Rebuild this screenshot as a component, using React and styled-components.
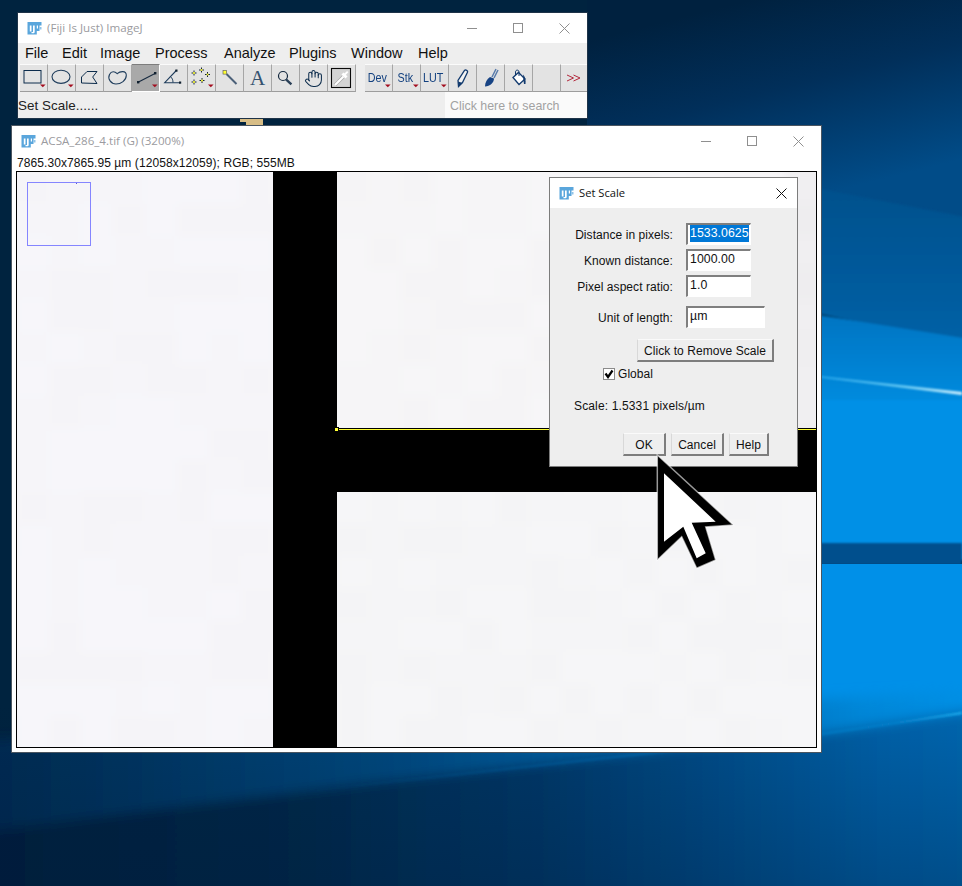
import React from "react";
import styled, { createGlobalStyle } from "styled-components";
import { Hand } from "lucide-react";

const Global = createGlobalStyle`
  html, body { margin: 0; padding: 0; background: #00213f; }
  #root { width: 962px; height: 886px; }
  * { box-sizing: border-box; }
`;

const Desktop = styled.div`
  position: relative;
  width: 962px;
  height: 886px;
  overflow: hidden;
  font-family: "Liberation Sans", Arial, sans-serif;
`;
const WallpaperSvg = styled.svg`
  position: absolute;
  inset: 0;
  display: block;
`;

const Win = styled.div`
  position: absolute;
  left: ${(p) => p.$x}px;
  top: ${(p) => p.$y}px;
  width: ${(p) => p.$w}px;
  height: ${(p) => p.$h}px;
  border: 1px solid ${(p) => p.$edge};
  background: ${(p) => p.$bg};
  display: flex;
  flex-direction: column;
`;
const TitleBar = styled.div`
  height: ${(p) => p.$h}px;
  flex: none;
  background: #fff;
  display: flex;
  align-items: center;
  padding-left: ${(p) => p.$pad}px;
`;
const TitleText = styled.span`
  margin: -2px 0 0 ${(p) => p.$gap}px;
  font-family: "Open Sans", sans-serif;
  font-size: ${(p) => p.$size || 11.6}px;
  color: ${(p) => p.$color};
  white-space: nowrap;
  flex: 1;
`;
const Controls = styled.div`
  display: flex;
  flex: none;
`;
const Control = styled.div`
  width: ${(p) => p.$w || 46}px;
  height: 28px;
  display: flex;
  align-items: center;
  justify-content: center;
`;

const MenuBar = styled.div`
  height: 21px;
  flex: none;
  display: flex;
  align-items: center;
  padding: 0 0 2px 7px;
  font-size: 14.5px;
  color: #111;
`;
const MenuItem = styled.span`
  width: ${(p) => p.$w}px;
`;
const ToolBar = styled.div`
  height: 28px;
  flex: none;
  display: flex;
  padding-left: 2px;
  overflow: hidden;
`;
const ToolGap = styled.div`
  width: 9px;
  flex: none;
`;
const Tool = styled.div`
  width: 28px;
  height: 28px;
  flex: none;
  position: relative;
  display: flex;
  align-items: center;
  justify-content: center;
  background: ${(p) => (p.$on ? "#a9a9a9" : "#e3e3e3")};
  border-style: solid;
  border-width: 1px 1px 1px 0;
  border-color: ${(p) => (p.$on ? "#7d7d7d #fff #fff #7d7d7d" : "#fbfbfb #a6a6a6 #9d9d9d #fbfbfb")};
`;
const ToolSvg = styled.svg`
  position: absolute;
  left: 0;
  top: -1px;
  width: 28px;
  height: 28px;
  display: block;
`;
const Mono = styled.span`
  font-size: 12.8px;
  color: #12407f;
  transform: scaleX(0.84);
  margin-top: -2px;
  margin-left: -3px;
  white-space: nowrap;
`;
const StatusRow = styled.div`
  flex: 1;
  display: flex;
  min-height: 0;
`;
const StatusText = styled.div`
  width: 427px;
  font-size: 13.4px;
  letter-spacing: 0.05px;
  line-height: 27px;
  color: #222;
  white-space: nowrap;
`;
const SearchBox = styled.div`
  flex: 1;
  background: #fafafa;
  color: #a2a2a2;
  font-size: 12.4px;
  line-height: 28px;
  padding-left: 5px;
  white-space: nowrap;
`;

const InfoLine = styled.div`
  height: 15px;
  flex: none;
  padding-left: 5px;
  font-size: 12px;
  letter-spacing: 0.08px;
  line-height: 15px;
  color: #111;
  white-space: nowrap;
`;
const CanvasFrame = styled.div`
  margin-left: 4px;
  width: 801px;
  height: 577px;
  border: 1px solid #000;
  display: grid;
  grid-template-columns: 256px 64px 479px;
  grid-template-rows: 256px 64px 255px;
  position: relative;
  background: #000;
`;
const ImagePanel = styled.div`
  grid-column: ${(p) => p.$col};
  grid-row: ${(p) => p.$row};
  overflow: hidden;
`;
const PixelSvg = styled.svg`
  display: block;
`;
const NavBox = styled.div`
  position: absolute;
  left: 10px;
  top: 10px;
  width: 64px;
  height: 64px;
  border: 1px solid #8585ff;
`;
const NavDot = styled.div`
  position: absolute;
  left: 48px;
  top: 0;
  width: 1px;
  height: 1px;
  background: #5a5ad0;
`;
const SelectionLine = styled.div`
  position: absolute;
  left: 320px;
  right: 0;
  top: 256px;
  height: 2px;
  background: #ffff33;
  border-top: 1px solid #000;
`;
const Handle = styled.div`
  position: absolute;
  left: 317px;
  top: 255px;
  width: 5px;
  height: 5px;
  background: #ffff33;
  border: 1px solid #000;
`;

const DialogBody = styled.div`
  flex: 1;
  background: #eeeeee;
  padding-top: 15px;
  font-size: 12px;
  letter-spacing: 0.06px;
  color: #111;
`;
const FieldRow = styled.div`
  display: flex;
  align-items: center;
  height: 22px;
  margin-top: ${(p) => p.$mt || 0}px;
`;
const FieldLabel = styled.div`
  width: 123px;
  padding-top: 2px;
  text-align: right;
  margin-right: 13px;
  white-space: nowrap;
`;
const Field = styled.div`
  width: ${(p) => p.$w}px;
  height: 22px;
  background: #fff;
  border-style: solid;
  border-width: 2px 1px 1px 2px;
  border-color: #7f7f7f #fff #fff #7f7f7f;
  padding-left: 2px;
  line-height: 17px;
  font-size: 12.3px;
  white-space: nowrap;
`;
const Selected = styled.span`
  background: #0078d7;
  color: #fff;
  display: inline-block;
  line-height: 17px;
`;
const DlgButton = styled.div`
  width: ${(p) => p.$w}px;
  height: 23px;
  background: #eeeeee;
  border-style: solid;
  border-width: 1px 2px 2px 1px;
  border-color: #fafafa #7d7d7d #7d7d7d #d8d8d8;
  text-align: center;
  line-height: 22px;
  font-size: 12px;
  color: #111;
  flex: none;
`;
const RemoveWrap = styled.div`
  margin: 11px 0 0 87px;
`;
const CheckRow = styled.div`
  display: flex;
  align-items: center;
  margin: 5px 0 0 53px;
  height: 13px;
  gap: 3px;
`;
const CheckBox = styled.div`
  width: 12px;
  height: 12px;
  background: #fff;
  border: 1px solid #8b8b8b;
  display: flex;
  align-items: center;
  justify-content: center;
`;
const ScaleText = styled.div`
  margin: 19px 0 0 24px;
  line-height: 15px;
  letter-spacing: 0.14px;
  white-space: nowrap;
`;
const ButtonRow = styled.div`
  display: flex;
  gap: 5px;
  margin: 19px 0 0 73px;
`;
const CursorSvg = styled.svg`
  position: absolute;
  left: 650px;
  top: 450px;
  display: block;
`;

const NAVY = "#0c2c4c";

function FijiIcon() {
  return (
    <svg width="15" height="15" viewBox="0 0 15 15">
      <path d="M0.500 1h14v3.500h-2V10H9.800v3.500H0.500z" fill="#5aa6dc" />
      <path d="M12.500 6h2v2.500h-2z" fill="#8fc3e8" />
      <path d="M2.800 4.500h1.700v6H2.800zM6 4.500h1.700v6.300c0 1-.7 1.500-1.700 1.500H4.500v-1.300H6z" fill="#fff" />
      <path d="M9.800 4.500h1.200v3H9.800z" fill="#fff" />
    </svg>
  );
}

function WinControls({ color }) {
  return (
    <Controls>
      <Control>
        <svg width="10" height="10" viewBox="0 0 10 10"><path d="M0 5.500h10" stroke={color} /></svg>
      </Control>
      <Control>
        <svg width="10" height="10" viewBox="0 0 10 10"><rect x=".5" y=".5" width="9" height="9" fill="none" stroke={color} /></svg>
      </Control>
      <Control>
        <svg width="11" height="11" viewBox="0 0 11 11"><path d="M.5.5l10 10M10.500.5l-10 10" stroke={color} /></svg>
      </Control>
    </Controls>
  );
}

const Tri = () => <path d="M20 20.500h5.600l-2.800 2.800z" fill="#a30d1e" />;

function Icon({ children }) {
  return <ToolSvg viewBox="0 0 28 28">{children}</ToolSvg>;
}

function Sparkle({ x, y }) {
  return (
    <g>
      <path d={`M${x - 2.5} ${y}h5M${x} ${y - 2.5}v5`} stroke="#14233a" strokeWidth="1" />
      <rect x={x - 0.9} y={y - 0.9} width="1.8" height="1.8" fill="#ffff30" />
    </g>
  );
}

function Pixels({ w, h, seed, base = [246, 245, 249], fade = 0 }) {
  const cells = [];
  const size = 32;
  for (let j = -2; j * size < h + 64; j++) {
    for (let i = -2; i * size < w + 64; i++) {
      const n = Math.sin((i + 3) * 12.9898 + (j + 3) * 78.233 + seed) * 43758.5453;
      const d = Math.round((n - Math.floor(n) - 0.5) * 3);
      const f = fade && (i * size) / w > 0.88 ? fade : 0;
      const c = `rgb(${base[0] + d - f},${base[1] + d - f},${base[2] + d - f})`;
      cells.push(<rect key={`${i}-${j}`} x={i * size} y={j * size} width={size} height={size} fill={c} />);
    }
  }
  return (
    <PixelSvg width={w} height={h} viewBox={`0 0 ${w} ${h}`}>
      <defs>
        <filter id={`pix${seed}`} filterUnits="userSpaceOnUse" x="-64" y="-64" width={w + 128} height={h + 128}>
          <feGaussianBlur stdDeviation="5" />
        </filter>
      </defs>
      <g filter={`url(#pix${seed})`}>{cells}</g>
    </PixelSvg>
  );
}

function Wallpaper() {
  return (
    <WallpaperSvg width="962" height="886" viewBox="0 0 962 886">
      <defs>
        <linearGradient id="top" gradientUnits="userSpaceOnUse" x1="750" y1="0" x2="800" y2="200">
          <stop offset="0" stopColor="#00213f" />
          <stop offset="0.45" stopColor="#012f5a" />
          <stop offset="1" stopColor="#014c88" />
        </linearGradient>
        <linearGradient id="b1" x1="0" y1="0" x2="0" y2="1">
          <stop offset="0" stopColor="#01508c" />
          <stop offset="1" stopColor="#0062a8" />
        </linearGradient>
        <linearGradient id="b2" gradientUnits="userSpaceOnUse" x1="900" y1="320" x2="900" y2="420">
          <stop offset="0" stopColor="#0076c4" />
          <stop offset="1" stopColor="#0090e4" />
        </linearGradient>
        <linearGradient id="streak" x1="0" y1="0" x2="1" y2="0">
          <stop offset="0" stopColor="#29a9ee" />
          <stop offset="0.6" stopColor="#6ecff6" />
          <stop offset="1" stopColor="#d8f4ff" />
        </linearGradient>
        <linearGradient id="low" x1="0" y1="0" x2="1" y2="0">
          <stop offset="0" stopColor="#001e3c" />
          <stop offset="0.3" stopColor="#002848" />
          <stop offset="0.55" stopColor="#003868" />
          <stop offset="0.75" stopColor="#00508e" />
          <stop offset="0.9" stopColor="#0062aa" />
          <stop offset="1" stopColor="#0068b2" />
        </linearGradient>
        <linearGradient id="shade" x1="0" y1="0" x2="0" y2="1">
          <stop offset="0" stopColor="#001a3a" stopOpacity="0" />
          <stop offset="1" stopColor="#001a3a" stopOpacity="0.32" />
        </linearGradient>
        <linearGradient id="up" x1="0" y1="0" x2="1" y2="0">
          <stop offset="0" stopColor="#012a50" />
          <stop offset="0.4" stopColor="#01497f" />
          <stop offset="0.7" stopColor="#006cb6" />
          <stop offset="0.88" stopColor="#0088da" />
          <stop offset="1" stopColor="#0090e6" />
        </linearGradient>
        <linearGradient id="streak2" x1="0" y1="0" x2="1" y2="0">
          <stop offset="0" stopColor="#0a5c9c" stopOpacity="0" />
          <stop offset="0.5" stopColor="#0a6cb2" stopOpacity="0.55" />
          <stop offset="0.9" stopColor="#0a88d4" stopOpacity="0.7" />
          <stop offset="1" stopColor="#20b4f4" />
        </linearGradient>
        <filter id="wall1"><feGaussianBlur stdDeviation="1.200" /></filter>
        <filter id="wall2" filterUnits="userSpaceOnUse" x="-20" y="680" width="1002" height="230"><feGaussianBlur stdDeviation="6" /></filter>
        <filter id="wall3" filterUnits="userSpaceOnUse" x="800" y="150" width="182" height="440"><feGaussianBlur stdDeviation="1.200" /></filter>
      </defs>
      <rect width="962" height="886" fill="#00233f" />
      <rect x="587" y="0" width="375" height="230" fill="url(#top)" />
      <g filter="url(#wall3)">
        <polygon points="800,185 1000,224 1000,350 800,310" fill="url(#b1)" />
        <polygon points="800,312 1000,344 1000,560 800,560" fill="url(#b2)" />
        <rect x="800" y="400" width="180" height="145" fill="#0090e6" />
      </g>
      <polygon points="815,377 962,395 962,392 815,375.500" fill="url(#streak)" filter="url(#wall1)" />
      <rect x="800" y="543" width="162" height="22" fill="#014f8d" filter="url(#wall1)" />
      <rect x="800" y="564" width="162" height="180" fill="#0090e8" />
      <g filter="url(#wall2)">
        <polygon points="-20,740 982,690 982,712 822,733 368,783 -20,832" fill="url(#up)" />
        <polygon points="-20,832 368,783 822,733 982,709 982,910 -20,910" fill="url(#low)" />
      </g>
      <rect x="0" y="700" width="962" height="186" fill="url(#shade)" />
      <polygon points="300,791 822,733 962,712 962,714 822,735 300,793" fill="url(#streak2)" filter="url(#wall1)" />
      <polygon points="240,118 263,118 263,125 246,125 246,122 240,122" fill="#d7bd86" />
    </WallpaperSvg>
  );
}

export default function App() {
  return (
    <Desktop>
      <Global />
      <Wallpaper />

      <Win $x={11} $y={125} $w={811} $h={628} $edge="#4a5560" $bg="#fff">
        <TitleBar $h={30} $pad={9}>
          <FijiIcon />
          <TitleText $gap={5} $color="#9b9ba0">ACSA_286_4.tif (G) (3200%)</TitleText>
          <WinControls color="#8f8f8f" />
        </TitleBar>
        <InfoLine>7865.30x7865.95 µm (12058x12059); RGB; 555MB</InfoLine>
        <CanvasFrame>
          <ImagePanel $col="1" $row="1 / span 3"><Pixels w={256} h={575} seed={1} /></ImagePanel>
          <ImagePanel $col="3" $row="1"><Pixels w={479} h={256} seed={2} base={[246, 245, 247]} fade={7} /></ImagePanel>
          <ImagePanel $col="3" $row="3"><Pixels w={479} h={255} seed={3} base={[245, 245, 247]} /></ImagePanel>
          <NavBox><NavDot /></NavBox>
          <SelectionLine />
          <Handle />
        </CanvasFrame>
      </Win>

      <Win $x={17} $y={12} $w={571} $h={107} $edge="#1e3348" $bg="#eeeeee">
        <TitleBar $h={30} $pad={9}>
          <FijiIcon />
          <TitleText $gap={5} $color="#9b9ba0">(Fiji Is Just) ImageJ</TitleText>
          <WinControls color="#8f8f8f" />
        </TitleBar>
        <MenuBar>
          <MenuItem $w={37}>File</MenuItem>
          <MenuItem $w={38}>Edit</MenuItem>
          <MenuItem $w={55}>Image</MenuItem>
          <MenuItem $w={69}>Process</MenuItem>
          <MenuItem $w={65}>Analyze</MenuItem>
          <MenuItem $w={62}>Plugins</MenuItem>
          <MenuItem $w={67}>Window</MenuItem>
          <MenuItem $w={40}>Help</MenuItem>
        </MenuBar>
        <ToolBar>
          <Tool><Icon><rect x="4" y="6.500" width="17" height="12.500" fill="none" stroke={NAVY} /><Tri /></Icon></Tool>
          <Tool><Icon><ellipse cx="13" cy="12.800" rx="9" ry="6.600" fill="none" stroke="#1f3d5c" strokeWidth="1.100" /><Tri /></Icon></Tool>
          <Tool><Icon><path d="M5.500 19V13l5.500-5.500h10L16.700 13l4.300 6.500z" fill="none" stroke={NAVY} /></Icon></Tool>
          <Tool><Icon><path d="M5.500 10.500C7.500 6.500 11 7.500 13.200 9.700 16 7.200 22.300 6.200 22.300 11.300 22.300 16.400 17 20 12 20 7 20 3.300 15 5.500 10.500z" fill="none" stroke="#1f3d5c" strokeWidth="1.100" /></Icon></Tool>
          <Tool $on><Icon><path d="M6.500 18L23 9.500" stroke="#16293f" strokeWidth="1.100" /><rect x="5" y="17" width="2.400" height="2.400" fill="#10202f" /><rect x="22" y="8" width="2.400" height="2.400" fill="#10202f" /><Tri /></Icon></Tool>
          <Tool><Icon><path d="M16.300 6.500L4.700 18.700H20" fill="none" stroke="#1f3d5c" strokeWidth="1.100" /><path d="M10.500 12.700C12.200 14 13 16 13 18.500" fill="none" stroke="#1f3d5c" /><rect x="15.300" y="5.500" width="2.200" height="2.200" fill="#10202f" /><rect x="19" y="17.500" width="2.200" height="2.200" fill="#10202f" /></Icon></Tool>
          <Tool><Icon><Sparkle x={6} y={9} /><Sparkle x={13.500} y={6} /><Sparkle x={19.500} y={10.500} /><Sparkle x={6} y={18} /><Sparkle x={14} y={16.500} /><Tri /></Icon></Tool>
          <Tool><Icon><path d="M10.500 10l10 10" stroke="#4b6078" strokeWidth="2" /><rect x="7" y="6.500" width="3.600" height="3.600" fill="#ffff30" stroke="#555" strokeWidth=".6" /></Icon></Tool>
          <Tool><Icon><text x="13.500" y="20.500" textAnchor="middle" fontFamily="Liberation Serif, serif" fontSize="21" fill="#34526f">A</text></Icon></Tool>
          <Tool><Icon><circle cx="11" cy="12" r="4.500" fill="none" stroke="#14283e" strokeWidth="1.200" /><path d="M14 15.300l5.400 5" stroke="#2a4058" strokeWidth="2.400" /></Icon></Tool>
          <Tool><Hand size={19} strokeWidth={1.300} color={NAVY} /></Tool>
          <Tool><Icon><rect x="3.500" y="4.500" width="19" height="19" fill="#d4d4d4" stroke="#0a0a0a" strokeWidth="1.100" /><path d="M7 21L15.500 12.500" stroke="#a9a9a9" strokeWidth="3.600" /><path d="M7 21L15.500 12.500" stroke="#fff" strokeWidth="2.200" /><path d="M14.500 9.500L18.500 13.500" stroke="#fff" strokeWidth="3" /><path d="M17.500 8.500L18.800 9.800" stroke="#fff" strokeWidth="4.500" /></Icon></Tool>
          <ToolGap />
          <Tool><Mono>Dev</Mono><Icon><Tri /></Icon></Tool>
          <Tool><Mono>Stk</Mono><Icon><Tri /></Icon></Tool>
          <Tool><Mono>LUT</Mono><Icon><Tri /></Icon></Tool>
          <Tool><Icon><path d="M9.500 22.500L9 16.500 15.500 6.500c1-1.300 3.800.2 3 1.800L13.500 18.500z" fill="#f2f2f2" stroke="#123a6e" strokeWidth="1.300" /><path d="M9.500 22.500L9 17.500l4 1.200z" fill="#123a6e" /></Icon></Tool>
          <Tool><Icon><path d="M15 13L19 5M17 14L21 6" stroke="#5a7cab" strokeWidth="1.500" /><path d="M8 22.500c0-4 2-7.500 5-9.500l4 1.500c0 4-4 8-9 8z" fill="#174384" /></Icon></Tool>
          <Tool><Icon><path d="M8 13.500L13.500 8.500 20 15 14 20.500z" fill="#fff" stroke="#123a6e" strokeWidth="1.300" /><path d="M10.500 11V8c0-2.500 3.500-2.500 3.500 0v4" fill="none" stroke="#123a6e" /><path d="M18 10.500c2 2 3 5 2.500 9.500h-1.500l-.5-3.500z" fill="#123a6e" /></Icon></Tool>
          <Tool />
          <Tool><Icon><path d="M6 11l6.500 3L6 17M12.500 11L19 14l-6.500 3" fill="none" stroke="#b3283c" strokeWidth="1" /></Icon></Tool>
        </ToolBar>
        <StatusRow>
          <StatusText>Set Scale......</StatusText>
          <SearchBox>Click here to search</SearchBox>
        </StatusRow>
      </Win>

      <Win $x={549} $y={177} $w={249} $h={290} $edge="#7c7c7c" $bg="#eeeeee">
        <TitleBar $h={30} $pad={9}>
          <FijiIcon />
          <TitleText $gap={5} $size={11.2} $color="#111">Set Scale</TitleText>
          <Controls>
            <Control $w={32}>
              <svg width="11" height="11" viewBox="0 0 11 11"><path d="M.5.5l10 10M10.500.5l-10 10" stroke="#111" /></svg>
            </Control>
          </Controls>
        </TitleBar>
        <DialogBody>
          <FieldRow>
            <FieldLabel>Distance in pixels:</FieldLabel>
            <Field $w={65}><Selected>1533.0625</Selected></Field>
          </FieldRow>
          <FieldRow $mt={4}>
            <FieldLabel>Known distance:</FieldLabel>
            <Field $w={65}>1000.00</Field>
          </FieldRow>
          <FieldRow $mt={4}>
            <FieldLabel>Pixel aspect ratio:</FieldLabel>
            <Field $w={65}>1.0</Field>
          </FieldRow>
          <FieldRow $mt={9}>
            <FieldLabel>Unit of length:</FieldLabel>
            <Field $w={79}>µm</Field>
          </FieldRow>
          <RemoveWrap>
            <DlgButton $w={137}>Click to Remove Scale</DlgButton>
          </RemoveWrap>
          <CheckRow>
            <CheckBox>
              <svg width="10" height="10" viewBox="0 0 10 10"><path d="M1.500 4.500L4 8 8.500 1.500" fill="none" stroke="#000" strokeWidth="2.200" /></svg>
            </CheckBox>
            <span>Global</span>
          </CheckRow>
          <ScaleText>Scale: 1.5331 pixels/µm</ScaleText>
          <ButtonRow>
            <DlgButton $w={43}>OK</DlgButton>
            <DlgButton $w={53}>Cancel</DlgButton>
            <DlgButton $w={40}>Help</DlgButton>
          </ButtonRow>
        </DialogBody>
      </Win>

      <CursorSvg width="90" height="125" viewBox="0 0 90 125">
        <polygon points="7.300,5 83.300,75 55.700,77 65.700,110 46.700,118.300 31.700,86.700 7.300,110" fill="#000" stroke="#fff" strokeOpacity="0.6" strokeWidth="1.500" />
        <polygon points="14,23.300 65.700,71.700 41.700,72.700 55.700,103.300 46.700,108.300 33.300,76.700 14,91.700" fill="#fff" />
      </CursorSvg>
    </Desktop>
  );
}
